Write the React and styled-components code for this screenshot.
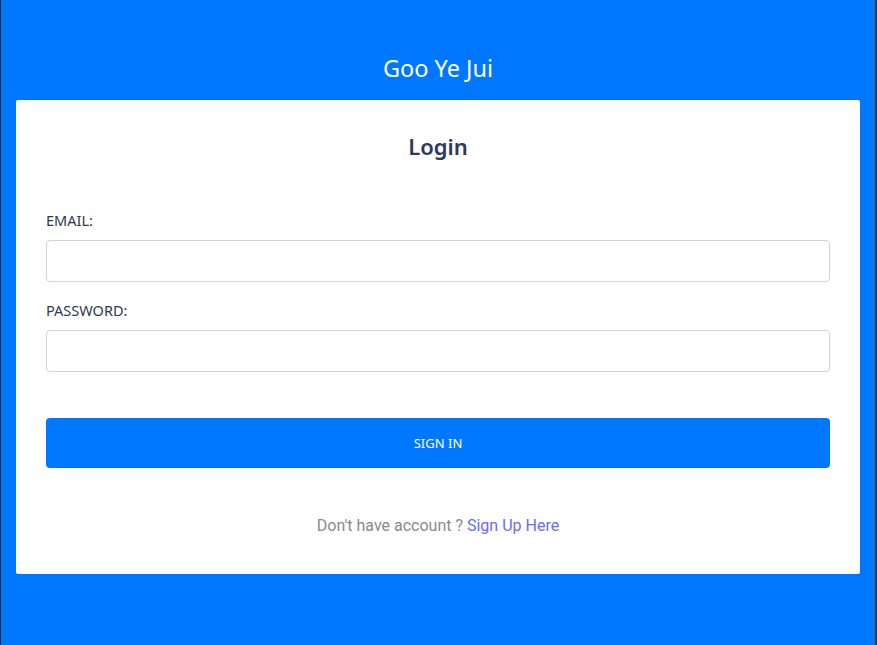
import React from "react";
import styled, { createGlobalStyle } from "styled-components";

const GlobalStyle = createGlobalStyle`
	html, body {
		margin: 0;
		padding: 0;
		height: 100%;
		background: #0077ff;
	}
	#root {
		height: 100%;
	}
	* {
		box-sizing: border-box;
	}
`;

function App() {
	return (
		<>
			<GlobalStyle />
			<Page>
				<Brand>Goo Ye Jui</Brand>
				<Card>
					<Title>Login</Title>
					<Form onSubmit={(e) => e.preventDefault()}>
						<Field>
							<Label htmlFor="email">EMAIL:</Label>
							<Input id="email" type="email" />
						</Field>
						<Field>
							<Label htmlFor="password">PASSWORD:</Label>
							<Input id="password" type="password" />
						</Field>
						<SubmitButton type="submit">SIGN IN</SubmitButton>
					</Form>
					<Footer>
						Don't have account ? <a href="#signup">Sign Up Here</a>
					</Footer>
				</Card>
			</Page>
		</>
	);
}

const Page = styled.div`
	min-height: 100%;
	display: flex;
	flex-direction: column;
	padding: 52px 15px 0 15px;
	border-left: 1px solid #2b2b2b;
	border-right: 2px solid #3a3a3a;
	font-family: "Noto Sans", "Open Sans", sans-serif;
`;

const Brand = styled.h1`
	margin: 0 0 16px;
	text-align: center;
	font-size: 23.5px;
	line-height: 32px;
	font-weight: 400;
	color: #ffffff;
`;

const Card = styled.div`
	background: #ffffff;
	border-radius: 2px;
	padding: 30px 30px 36px;
	display: flex;
	flex-direction: column;
`;

const Title = styled.h2`
	margin: 0;
	text-align: center;
	font-size: 22px;
	line-height: 32px;
	font-weight: 600;
	color: #2f3a5a;
`;

const Form = styled.form`
	display: flex;
	flex-direction: column;
	margin-top: 48px;
`;

const Field = styled.div`
	display: flex;
	flex-direction: column;
	gap: 9px;
	& + & {
		margin-top: 18px;
	}
`;

const Label = styled.label`
	font-size: 14.5px;
	line-height: 21px;
	color: #2f3a4e;
`;

const Input = styled.input`
	height: 42px;
	width: 100%;
	border: 1px solid #cfd2d8;
	border-radius: 4px;
	padding: 0 12px;
	font-size: 14px;
	outline: none;
`;

const SubmitButton = styled.button`
	margin-top: 46px;
	height: 50px;
	width: 100%;
	border: none;
	border-radius: 4px;
	background: #0077ff;
	color: #ffffff;
	font-family: inherit;
	font-size: 13px;
	cursor: pointer;
`;

const Footer = styled.p`
	margin: 46px 0 0;
	text-align: center;
	font-family: Roboto, "Liberation Sans", sans-serif;
	font-size: 16px;
	line-height: 24px;
	color: #8a8a8a;
	a {
		color: #6a6aff;
		text-decoration: none;
	}
`;

export default App;
